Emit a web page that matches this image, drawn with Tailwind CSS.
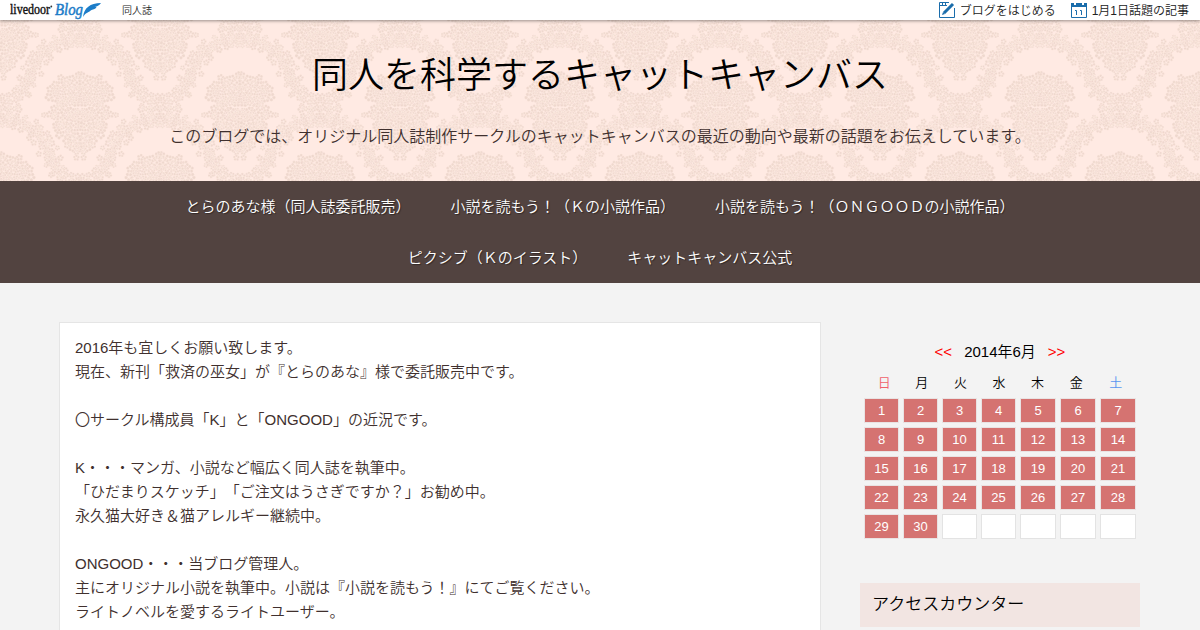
<!DOCTYPE html>
<html lang="ja">
<head>
  <meta charset="UTF-8" />
  <meta name="viewport" content="width=device-width, initial-scale=1.0"/>
  <title>同人を科学するキャットキャンバス</title>
  <script src="https://cdn.jsdelivr.net/npm/@tailwindcss/browser@4"></script>
</head>
<body class="bg-[#f3f3f3] h-[630px] overflow-hidden font-['Liberation_Sans','Noto_Sans_CJK_JP',sans-serif] font-[350] [text-spacing-trim:space-all] text-[15px] text-[#40302e]">
  <!-- livedoor bar -->
  <div class="relative z-10 h-5 bg-white shadow-[0_1px_3px_rgba(0,0,0,0.4)] flex items-center text-xs text-[#222] pl-2.5 pr-[11px]">
    <svg class="w-[92px] h-5 shrink-0" viewBox="0 0 92 20">
      <text x="0" y="14" font-family="Liberation Serif, serif" font-size="14" font-weight="400" textLength="40" lengthAdjust="spacingAndGlyphs" fill="#111" stroke="#111" stroke-width="0.4">livedoor</text>
      <circle cx="41.3" cy="6.5" r="0.9" fill="#333"/>
      <text x="45" y="14.5" font-family="Liberation Serif, serif" font-size="17" font-style="italic" font-weight="400" textLength="28" lengthAdjust="spacingAndGlyphs" fill="#1b7cc8" stroke="#1b7cc8" stroke-width="0.5">Blog</text>
      <path d="M73 17C74 8 80 3 91 3C89 6 87 6 85 7C86 7 87 7 86 8C84 10 82 9 80 11C78 13 76 12 73 17Z" fill="#1b7cc8"/>
    </svg>
    <a href="#" class="ml-5 pt-px text-[10px] leading-5">同人誌</a>
    <a href="#" class="ml-auto flex items-center leading-5">
      <svg class="w-4 h-4 mr-[5px]" viewBox="0 0 16 16" fill="none" stroke="#1a6dab">
        <path d="M10 .5H.5V15.5H15.5V6M1 3.5H8M3.5 1V3M6.5 1V3"/>
        <path d="M5 11L14 2" stroke-width="3"/>
        <path d="M3 13L4 10L6 12Z" fill="#1a6dab" stroke="none"/>
      </svg>
      <span class="pt-0.5">ブログをはじめる</span>
    </a>
    <a href="#" class="ml-[15px] flex items-center leading-5">
      <svg class="w-4 h-4 mr-[5px]" viewBox="0 0 16 16" fill="none" stroke="#1a6dab">
        <path d="M.5 1V15.5H15.5V1"/>
        <path d="M0 1H3V3H5V1H11V3H13V1H16V5H0Z" fill="#1a6dab" stroke="none"/>
        <path d="M4 8.5H5.5V13M9 8.5H10.5V13"/>
      </svg>
      <span class="pt-0.5">1月1日話題の記事</span>
    </a>
  </div>

  <header class="relative h-[161px] bg-[#ffeae3] text-center">
    <svg class="absolute inset-0 w-full h-full" aria-hidden="true">
      <defs>
        <pattern id="damask" width="160" height="160" patternUnits="userSpaceOnUse" y="-20">
          <g id="damaskTile"></g>
        </pattern>
      </defs>
      <rect width="100%" height="100%" fill="url(#damask)"/>
    </svg>
    <div class="relative pt-[30px]">
      <h1 class="text-[36px] leading-[52px] font-[350] text-black">同人を科学するキャットキャンバス</h1>
      <p class="mt-[23px] text-base leading-6">このブログでは、オリジナル同人誌制作サークルのキャットキャンバスの最近の動向や最新の話題をお伝えしています。</p>
    </div>
  </header>

  <nav class="bg-[#524340] h-[102px]">
    <ul class="flex flex-wrap justify-center w-[1080px] mx-auto text-white leading-[51px] [text-shadow:1px_1px_1px_rgba(0,0,0,0.4)]">
      <li class="px-5"><a href="#">とらのあな様（同人誌委託販売）</a></li>
      <li class="px-5"><a href="#">小説を読もう！（Ｋの小説作品）</a></li>
      <li class="px-5"><a href="#">小説を読もう！（ＯＮＧＯＯＤの小説作品）</a></li>
      <li class="px-5"><a href="#">ピクシブ（Ｋのイラスト）</a></li>
      <li class="px-5"><a href="#">キャットキャンバス公式</a></li>
    </ul>
  </nav>

  <div class="flex justify-between w-[1081px] ml-[59px] pt-[39px]">
    <main class="w-[762px] h-[308px] bg-white border border-b-0 border-[#e5e5e5] px-[15px] pt-[13px] leading-6">
      <p>2016年も宜しくお願い致します。<br>現在、新刊「救済の巫女」が『とらのあな』様で委託販売中です。</p>
      <p class="mt-6">〇サークル構成員「K」と「ONGOOD」の近況です。</p>
      <p class="mt-6">K・・・マンガ、小説など幅広く同人誌を執筆中。<br>「ひだまりスケッチ」「ご注文はうさぎですか？」お勧め中。<br>永久猫大好き＆猫アレルギー継続中。</p>
      <p class="mt-6">ONGOOD・・・当ブログ管理人。<br>主にオリジナル小説を執筆中。小説は『小説を読もう！』にてご覧ください。<br>ライトノベルを愛するライトユーザー。</p>
    </main>

    <aside class="w-[280px] pt-[18px]">
      <div class="flex justify-center gap-3 leading-6 text-black">
        <a href="#" class="text-[#f00]">&lt;&lt;</a>
        <span>2014年6月</span>
        <a href="#" class="text-[#f00]">&gt;&gt;</a>
      </div>
      <div class="grid grid-cols-7 w-[270px] ml-1 mt-[9px] text-[13px] leading-5 text-center text-black">
        <span class="pl-0.5 text-[#f0606a]">日</span>
        <span>月</span>
        <span>火</span>
        <span>水</span>
        <span>木</span>
        <span>金</span>
        <span class="pl-0.5 text-[#5a96f0]">土</span>
      </div>
      <div id="calendar" class="grid grid-cols-[35px_35px_35px_35px_36px_36px_36px] gap-1 ml-1 mt-[5px] text-[13px] leading-[23px] text-center text-white"></div>
      <h2 class="mt-11 h-11 pl-3 bg-[#f2e5e2] text-[17px] leading-[44px] font-[350] text-black">アクセスカウンター</h2>
    </aside>
  </div>

  <script>
    const calendar = document.getElementById("calendar");
    for (let day = 1; day <= 35; day++) {
      const cell = document.createElement("div");
      cell.className = day <= 30
        ? "h-[25px] border border-[#e9e3e3] bg-[#d57371]"
        : "h-[25px] border border-[#e3e3e3] bg-white";
      cell.textContent = day <= 30 ? day : "";
      calendar.appendChild(cell);
    }

    // Header wallpaper: medallions and flower garlands, mirrored left to right
    let seed = 7;
    function rand() {
      seed = (seed * 16807) % 2147483647;
      return seed / 2147483647;
    }

    function floret(x, y, r) {
      let d = "";
      const turn = rand() * 6.28;
      for (let i = 0; i < 5; i++) {
        const a = turn + i * 1.257;
        const px = x + Math.cos(a) * r * 0.65;
        const py = y + Math.sin(a) * r * 0.65;
        const q = r * 0.42;
        d += `M${(px - q).toFixed(1)} ${py.toFixed(1)}a${q} ${q} 0 1 0 ${2 * q} 0a${q} ${q} 0 1 0 ${-2 * q} 0`;
      }
      return d;
    }

    // half-widths of the medallion from top to bottom
    const outline = [[-45, 2], [-38, 6], [-34, 20], [-24, 27], [-12, 28], [0, 34], [12, 32], [20, 25], [28, 17], [34, 10], [40, 8], [47, 1]];
    function halfWidth(y) {
      for (let i = 1; i < outline.length; i++) {
        const [y0, w0] = outline[i - 1];
        const [y1, w1] = outline[i];
        if (y <= y1) return w0 + (w1 - w0) * (y - y0) / (y1 - y0);
      }
      return 0;
    }

    let half = "";
    for (let y = -44; y < 47; y += 5) {
      const edge = halfWidth(y) + rand() * 9 - 4;
      for (let x = 1 + rand() * 3; x < edge; x += 5.2 + rand()) {
        half += floret(x, y + rand() * 4, 2.8 + rand() * 1.6);
      }
    }

    const garland = [[3, -90, 8], [9, -83, 8], [17, -75, 7], [5, -70, 7], [25, -68, 6], [34, -63, 6], [42, -57, 6], [48, -49, 6], [51, -40, 6], [54, -30, 6], [57, -20, 6], [64, -11, 6], [73, -2, 7], [75, 8, 6], [65, 10, 6], [55, 15, 5], [47, 22, 6], [39, 31, 6], [34, 42, 6], [29, 52, 6], [20, 61, 6]];
    for (const [x, y, r] of garland) {
      half += floret(x, y, 3.2);
      const turn = rand() * 6.28;
      for (let i = 0; i < 4; i++) {
        const a = turn + i * 1.57;
        const reach = r * (0.7 + rand() * 0.6);
        half += floret(x + Math.cos(a) * reach, y + Math.sin(a) * reach, 2.2 + rand() * 1.4);
      }
    }

    let tile = `<defs><path id="half" d="${half}"/></defs>`;
    for (const [x, y] of [[80, 111], [80, -49], [80, 271], [0, 31], [160, 31], [0, 191], [160, 191]]) {
      tile += `<use href="#half" x="${x}" y="${y}"/><use href="#half" transform="translate(${x} ${y}) scale(-1 1)"/>`;
    }
    const group = document.getElementById("damaskTile");
    group.setAttribute("fill", "#efd8ce");
    group.setAttribute("stroke", "#ffeae3");
    group.setAttribute("stroke-width", "0.35");
    group.innerHTML = tile;
  </script>
</body>
</html>
